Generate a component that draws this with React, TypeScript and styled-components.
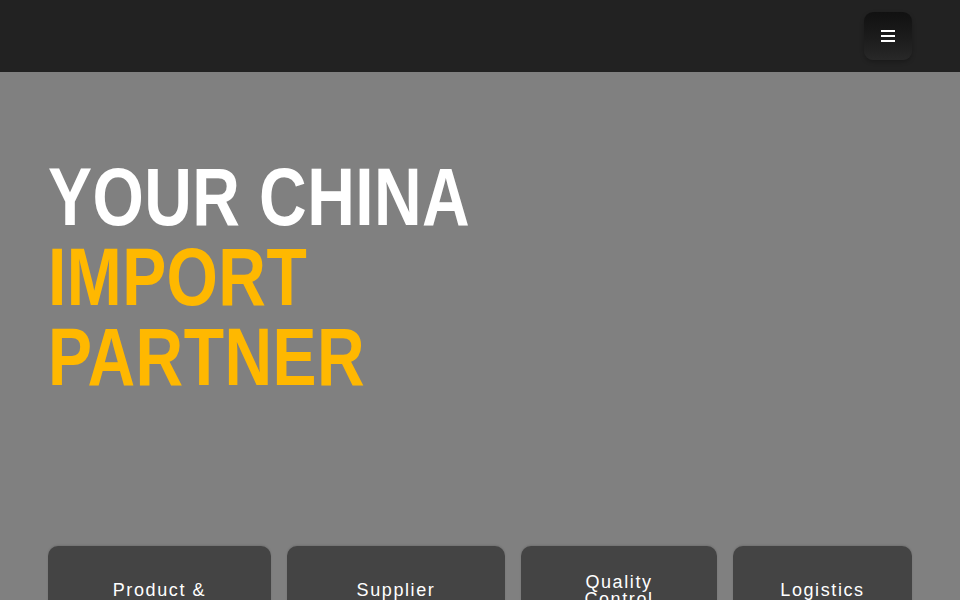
import React from 'react'
import styled, { createGlobalStyle } from 'styled-components';

const Global = createGlobalStyle`
  html, body {
    margin: 0;
    padding: 0;
    background: #808080;
    font-family: "Liberation Sans", Arial, sans-serif;
    overflow: hidden;
  }
`;

const Page = styled.div`
  display: flex;
  flex-direction: column;
  width: 960px;
  height: 600px;
  overflow: hidden;
  background: #808080;
`;

const Header = styled.header`
  height: 72px;
  flex-shrink: 0;
  background: #222222;
  display: flex;
  align-items: center;
  justify-content: flex-end;
  padding: 0 48px;
`;

const MenuButton = styled.button`
  width: 48px;
  height: 48px;
  border: none;
  border-radius: 9px;
  background: linear-gradient(180deg, #111111 0%, #1c1c1c 55%, #282828 100%);
  box-shadow: 0 2px 4px rgba(0, 0, 0, 0.25);
  display: flex;
  flex-direction: column;
  align-items: center;
  justify-content: center;
  gap: 3px;
  padding: 0;
  cursor: pointer;
`;

const Bar = styled.span`
  display: block;
  width: 14px;
  height: 2px;
  background: #ffffff;
`;

const Hero = styled.section`
  flex-grow: 1;
  padding: 85px 48px 0;
  display: flex;
  flex-direction: column;
`;

const Headline = styled.h1`
  margin: 0;
  font-family: "Liberation Sans", Arial, sans-serif;
  font-weight: 700;
  font-size: 82px;
  line-height: 80px;
  letter-spacing: 0.5px;
  text-transform: uppercase;
`;

// condensed face isn't installed, so squeeze the bold sans horizontally
const Line = styled.span<{ $accent?: boolean }>`
  display: block;
  width: max-content;
  transform: scaleX(0.805);
  transform-origin: left center;
  color: ${p => (p.$accent ? '#ffb800' : '#ffffff')};
`;

const Services = styled.div`
  margin-top: 149px;
  display: grid;
  grid-template-columns: 223fr 218fr 196fr 179fr;
  gap: 16px;
`;

const Card = styled.div<{ $lift?: number }>`
  height: 140px;
  background: #444444;
  border-radius: 10px;
  box-shadow: 0 -1px 2px rgba(0, 0, 0, 0.12);
  padding-top: ${p => 36 - (p.$lift || 0)}px;
  text-align: center;
  color: #ffffff;
  font-size: 18px;
  line-height: 17px;
  letter-spacing: 1.6px;
`;

const Title = styled.div`
  white-space: nowrap;
`;

const services = [
  { title: ['Product &'] },
  { title: ['Supplier'] },
  { title: ['Quality', 'Control'], lift: 8 },
  { title: ['Logistics'] },
];

export default function App() {
  return (
    <Page>
      <Global />
      <Header>
        <MenuButton aria-label="Menu">
          <Bar />
          <Bar />
          <Bar />
        </MenuButton>
      </Header>
      <Hero>
        <Headline>
          <Line>Your China</Line>
          <Line $accent>Import</Line>
          <Line $accent>Partner</Line>
        </Headline>
        <Services>
          {services.map(s => (
            <Card key={s.title[0]} $lift={s.lift}>
              {s.title.map(t => (
                <Title key={t}>{t}</Title>
              ))}
            </Card>
          ))}
        </Services>
      </Hero>
    </Page>
  );
}
